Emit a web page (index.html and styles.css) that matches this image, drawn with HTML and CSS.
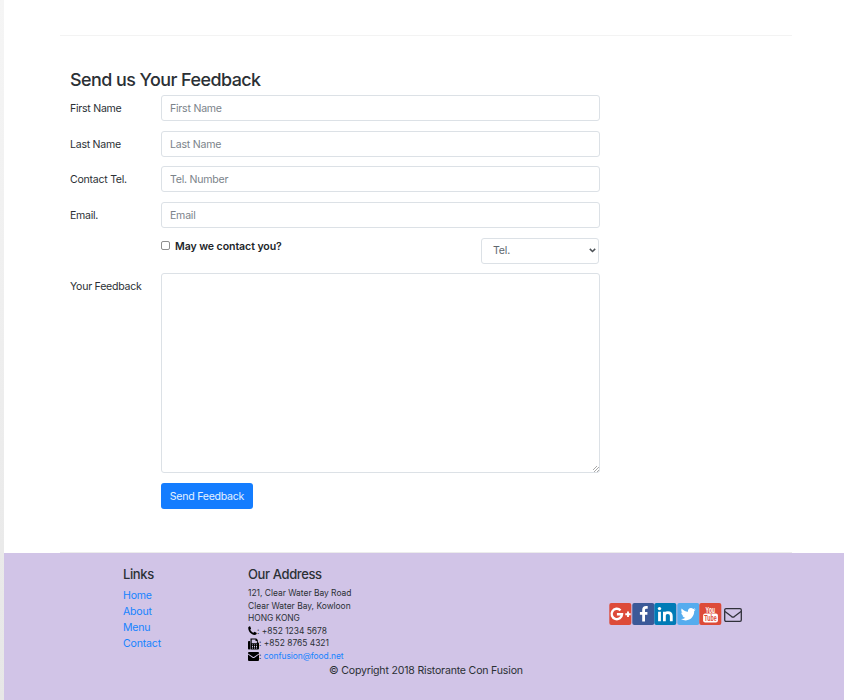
FILE: index.html
```html
<!DOCTYPE html>
<html lang="en">
<head>
<meta charset="utf-8">
<title>Ristorante Con Fusion</title>
<link rel="stylesheet" href="styles.css">
</head>
<body>
<main class="container">
  <hr class="rule">
  <section class="content">
    <h3 class="title">Send us Your Feedback</h3>
    <form class="feedback">
      <label class="label" for="fn">First Name</label><input class="control" id="fn" placeholder="First Name">
      <label class="label" for="ln">Last Name</label><input class="control" id="ln" placeholder="Last Name">
      <label class="label" for="tel">Contact Tel.</label><input class="control" id="tel" placeholder="Tel. Number">
      <label class="label" for="em">Email.</label><input class="control" id="em" placeholder="Email">
      <div class="contact">
        <label class="check"><input type="checkbox" class="box"><strong>May we contact you?</strong></label>
        <div class="select"><span>Tel.</span><svg width="7" height="5" viewBox="0 0 7 5"><path d="M.8.9 3.5 3.5 6.2.9" fill="none" stroke="#4c5156" stroke-width="1.5"/></svg></div>
      </div>
      <label class="label" for="fb">Your Feedback</label><textarea class="control area" id="fb"></textarea>
      <button class="button" type="button">Send Feedback</button>
    </form>
  </section>
  <hr class="rule last">
</main>
<footer class="footer">
  <div class="columns">
    <div class="links">
      <h5 class="heading">Links</h5>
      <a class="link" href="#">Home</a><a class="link" href="#">About</a><a class="link" href="#">Menu</a><a class="link" href="#">Contact</a>
    </div>
    <div class="office">
      <h5 class="heading">Our Address</h5>
      <address class="address">
        <div class="row">121, Clear Water Bay Road</div>
        <div class="row">Clear Water Bay, Kowloon</div>
        <div class="row hk">HONG KONG</div>
        <div class="row"><svg width="9" height="10" viewBox="0 0 9 10"><path d="M.3 1.3C.8.5 1.6.2 2.1.3L3.1 2.4C3 3 2.2 3.2 2.3 3.7 2.9 5.1 4 6.2 5.3 6.8 5.9 6.8 6.1 6 6.6 5.8L8.8 7C8.7 8.1 7.8 9 6.7 9 3.1 8.9-.2 4.9.3 1.3Z"/></svg>: +852 1234 5678</div>
        <div class="row"><svg width="11" height="12" viewBox="0 0 11 12"><path d="M0 4Q0 3 .8 3H1.6Q2.2 3 2.2 4V10.5Q2.2 11.5 1.4 11.5H.8Q0 11.5 0 10.5Z"/><path fill-rule="evenodd" d="M2.5.6H8.3L9.8 2V4.2Q11 4.5 11 5.5V10.4Q11 11.5 10 11.5H2.5ZM3.7 1.5V5.2H8.9V3H7.5V1.5ZM4 6.4V7.3H5V6.4ZM6 6.4V7.3H7V6.4ZM8 6.4V7.3H9V6.4ZM4 8V8.9H5V8ZM6 8V8.9H7V8ZM8 8V8.9H9V8ZM4 9.6V10.5H5V9.6ZM6 9.6V10.5H7V9.6ZM8 9.6V10.5H9V9.6Z"/></svg>: +852 8765 4321</div>
        <div class="row"><svg width="11" height="9" viewBox="0 0 11 9"><path d="M0 1Q0 0 1 0H10Q11 0 11 1V1.4L6.2 4.8Q5.5 5.3 4.8 4.8L0 1.4ZM0 2.5 4.5 5.7Q5.5 6.4 6.5 5.7L11 2.5V8Q11 9 10 9H1Q0 9 0 8Z"/></svg>: <a href="#">confusion@food.net</a></div>
      </address>
    </div>
    <div class="social">
      <svg class="tile" viewBox="0 0 22 22"><rect width="22" height="22" rx="2" fill="#dd4b39"/><path d="M11.2 7.3A5.2 5.2 0 1 0 12.7 11.3H7.6" fill="none" stroke="#fff" stroke-width="2.4"/><path d="M16 11.3H21.4M18.7 8.6V14" stroke="#fff" stroke-width="1.9"/></svg>
      <svg class="tile" viewBox="0 0 22 22"><rect width="22" height="22" rx="2" fill="#3b5998"/><path d="M15.4 4.3H13.8Q11.3 4.3 11.3 7V18.5M7.6 10.4H15.1" fill="none" stroke="#fff" stroke-width="2.8"/></svg>
      <svg class="tile" viewBox="0 0 22 22"><rect width="22" height="22" rx="2" fill="#007bb6"/><g fill="none" stroke="#fff" stroke-width="2.8"><path d="M5.2 8.7V18.3M10.1 8.7V18.3M10.1 12.3Q10.5 9.7 13.6 9.7 17 9.7 17 13V18.3"/></g><circle cx="5.2" cy="5.6" r="1.7" fill="#fff"/></svg>
      <svg class="tile" viewBox="0 0 22 22"><rect width="22" height="22" rx="2" fill="#55acee"/><path fill="#fff" d="M18.6 6.5 16.9 8.1C17.1 13 13.5 17.4 8.6 17.4 6.7 17.4 5 16.9 3.7 16 5.4 16.1 6.8 15.7 8 14.8 6.5 14.6 5.5 13.8 5.1 12.6H6.4C4.9 12.1 4 10.9 3.9 9.4L5.3 9.8C3.9 8.8 3.6 7 4.4 5.5 6 7.5 8.1 8.5 10.7 8.7 10.3 6.4 11.8 5 13.7 5 14.6 5 15.3 5.4 15.9 6L17.9 5.2 16.7 6.9Z"/></svg>
      <svg class="tile" viewBox="0 0 22 22"><rect width="22" height="22" rx="2" fill="#dd4b39"/><text x="11" y="9.5" textLength="9.5" lengthAdjust="spacingAndGlyphs" class="tube" fill="#fff">You</text><rect x="3.8" y="10.6" width="14.8" height="9" rx="2" fill="#fff"/><text x="11.2" y="18" textLength="12.3" lengthAdjust="spacingAndGlyphs" class="tube" fill="#dd4b39">Tube</text></svg>
      <svg class="mail" viewBox="0 0 18 14" fill="none" stroke="#30313a" stroke-width="1.3"><rect x=".7" y=".7" width="16.6" height="12.6" rx="1.3"/><path d="M1 3.5 7.6 8.6Q9 9.6 10.4 8.6L17 3.5"/></svg>
    </div>
  </div>
  <p class="copyright">© Copyright 2018 Ristorante Con Fusion</p>
</footer>
</body>
</html>
```
FILE: styles.css
```css
* { box-sizing: border-box; }
body {
  margin: 0;
  height: 700px;
  overflow: hidden;
  padding-left: 4px;
  background: linear-gradient(#f5f5f5, #e7e7e7) left / 4px 100% no-repeat #fff;
  color: #2b3035;
  font: 10.56px/16px Inter, "Liberation Sans", sans-serif;
  letter-spacing: -.18px;
}
a { color: #1683ff; text-decoration: none; }
.container { width: 732px; height: 553px; margin-left: 56px; display: flex; flex-direction: column; }
.rule { width: 100%; height: 1px; margin: 35px 0 0; border: 0; background: #f3f3f3; flex: none; }
.rule.last { margin-top: auto; background: #ececec; }
.content { padding: 33px 10px 0; }
.title { margin: 0; font-size: 17.9px; line-height: 22px; font-weight: 500; letter-spacing: -.53px; }
.feedback {
  display: grid;
  grid-template-columns: 91px 439px;
  grid-template-rows: repeat(4, 26px) 26px 200px 26px;
  row-gap: 9.65px;
  margin-top: 4px;
}
.label { padding-top: 6px; letter-spacing: -.25px; }
.control {
  width: 100%;
  height: 26px;
  padding: 1px 8px 0;
  border: 1px solid #dce1e6;
  border-radius: 3px;
  background: #fff;
  font: inherit;
  letter-spacing: -.22px;
  outline: 0;
}
.control::placeholder { color: #7b838a; opacity: 1; }
.area { height: 200px; resize: both; }
.area::-webkit-resizer {
  background: linear-gradient(135deg, transparent 30%, #aaa 30% 40%, transparent 40% 55%, #aaa 55% 65%, transparent 65% 80%, #aaa 80% 90%, transparent 90%) right bottom / 6px 6px no-repeat;
}
.contact { grid-column: 2; display: flex; justify-content: space-between; }
.check { display: flex; align-items: flex-start; padding-top: 1px; }
.check strong { font-weight: 600; letter-spacing: -.07px; color: #212529; }
.box {
  appearance: none;
  width: 9px;
  height: 9px;
  margin: 2px 5px 0 0;
  border: 1px solid #8f8f8f;
  border-radius: 2px;
  background: #fff;
}
.select {
  width: 118px;
  height: 26px;
  margin-right: 1px;
  padding: 0 2px 0 11px;
  display: flex;
  align-items: center;
  justify-content: space-between;
  border: 1px solid #dce1e6;
  border-radius: 3px;
  color: #60676e;
}
.button {
  grid-column: 2;
  width: 92px;
  height: 26px;
  padding: 2px 0 0;
  border: 0;
  border-radius: 3px;
  background: #147dff;
  color: #e5f1ff;
  font: inherit;
  letter-spacing: -.24px;
}
.footer { height: 147px; padding-top: 13px; background: #d1c4e7; }
.columns { display: grid; grid-template-columns: 125px 361px 1fr; height: 97px; padding-left: 119px; }
.heading { margin: 0; font-size: 13px; line-height: 16px; font-weight: 500; letter-spacing: -.38px; }
.links { display: flex; flex-direction: column; }
.links .heading { margin-bottom: 6px; }
.link { height: 16px; }
.address { margin-top: 5px; font-size: 8.45px; line-height: 12.6px; font-style: normal; letter-spacing: -.01px; }
.address a { letter-spacing: -.07px; }
.row { height: 12.6px; display: flex; align-items: center; white-space: pre; }
.row.hk { letter-spacing: -.04px; }
.row svg { flex: none; }
.social { display: flex; align-items: center; align-self: start; margin-top: 37px; }
.tile { width: 22.6px; height: 22px; overflow: visible; }
.mail { width: 18px; height: 14px; margin-left: 2px; margin-top: 2px; }
.tube { font: 700 8.2px "Liberation Sans", sans-serif; letter-spacing: 0; text-anchor: middle; }
.copyright { margin: 0; padding-left: 325px; }
```
